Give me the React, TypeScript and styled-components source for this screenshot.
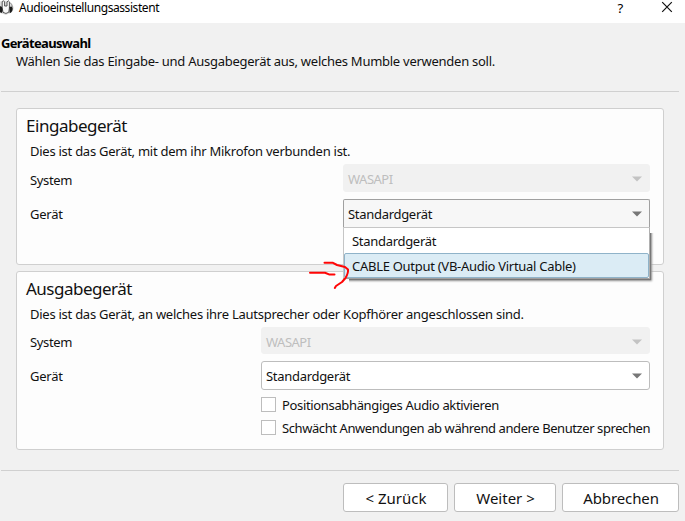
import React from 'react';
import styled, { createGlobalStyle } from 'styled-components';

const GlobalStyle = createGlobalStyle`
  *, *::before, *::after { box-sizing: border-box; }
  body {
    margin: 0;
    overflow: hidden;
    background: #f1f1f1;
    color: #111;
    font: 13px "Noto Sans", "Segoe UI", sans-serif;
  }
`;

const Wizard = styled.div`
  position: relative;
  display: flex;
  flex-direction: column;
  width: 685px;
  height: 521px;
  background: #f1f1f1;
`;

const Text = styled.span<{ $track?: number }>`
  white-space: nowrap;
  letter-spacing: ${(p) => p.$track ?? -0.256}px;
`;

const TitleBar = styled.header`
  display: flex;
  align-items: flex-start;
  height: 23px;
  background: #fff;
  color: #000;
  font-size: 12px;
  line-height: 16px;
`;

const AppIcon = styled.svg`
  flex: none;
  width: 14px;
  height: 16px;
  margin-right: 5px;
`;

const WindowControls = styled.div`
  display: flex;
  align-items: flex-start;
  gap: 35px;
  margin-left: auto;
  padding-right: 12px;
`;

const HelpMark = styled.span`
  width: 8px;
  font-size: 12px;
  line-height: 17px;
  transform: scale(1.1, 1.1);
`;

const CloseIcon = styled.svg`
  width: 12px;
  height: 12px;
  margin-top: 1px;
`;

const PageHeader = styled.section`
  display: flex;
  flex-direction: column;
  height: 69px;
  margin: 0 6px 16px 1px;
  padding-top: 11px;
  border-bottom: 1px solid #d0d0d0;
`;

const PageTitle = styled.h1`
  margin: 0;
  font-size: 13px;
  font-weight: 700;
  line-height: 18px;
  color: #000;
`;

const PageSubtitle = styled.p`
  margin: 0 0 0 15px;
  line-height: 19px;
`;

const Group = styled.section<{ $height: number }>`
  flex: none;
  height: ${(p) => p.$height}px;
  margin: 0 21px 6px 16px;
  padding: 5px 13px 0;
  background: #fdfdfd;
  border: 1px solid #cfcfcf;
  border-radius: 3px;
`;

const GroupTitle = styled.h2`
  margin: 0 0 1px -4px;
  font-size: 17px;
  font-weight: 400;
  line-height: 24px;
`;

const Description = styled.p`
  margin: 0;
  line-height: 25px;
`;

const Fields = styled.div<{ $labelWidth: number; $first: number }>`
  display: grid;
  grid-template-columns: ${(p) => p.$labelWidth}px 1fr;
  grid-template-rows: ${(p) => p.$first}px 29px;
  row-gap: 7px;
  align-items: center;
`;

const SystemLabel = styled.div`
  padding-top: 3px;
  letter-spacing: -0.362px;
`;

const Combo = styled.div<{ $tone?: 'open' | 'disabled' }>`
  display: flex;
  align-items: center;
  justify-content: space-between;
  height: 100%;
  padding: ${(p) => (p.$tone === 'disabled' ? 2 : 0)}px 7px 0 4px;
  border: 1px solid
    ${(p) => (p.$tone === 'disabled' ? '#f1f1f1' : p.$tone === 'open' ? '#a0a0a0' : '#bdbdbd')};
  border-bottom-color: ${(p) => (p.$tone === 'open' ? '#c4c4c4' : '')};
  border-radius: ${(p) => (p.$tone === 'open' ? '2px 2px 0 0' : '3px')};
  background: ${(p) => (p.$tone === 'disabled' ? '#f1f1f1' : p.$tone === 'open' ? '#f7f7f7' : '#fff')};
  color: ${(p) => (p.$tone === 'disabled' ? '#bebebe' : '#111')};
`;

const Arrow = styled.svg`
  width: 10px;
  height: 6px;
`;

const ComboAnchor = styled.div`
  position: relative;
  height: 100%;
`;

const Popup = styled.div`
  position: absolute;
  z-index: 2;
  top: 28px;
  left: 0;
  width: 307px;
  height: 52px;
  border: 1px solid #c6c6c6;
  border-right-color: #b0b0b0;
  border-bottom-color: #a0a0a0;
  background: #fff;
  box-shadow: 1px 1px 1px #777, 2px 2px 2px #999;
  clip-path: polygon(0 0, 307px 0, 307px 6px, 311px 6px, 311px 56px, 6px 56px, 6px 52px, 0 52px);
`;

const Option = styled.div<{ $active?: boolean }>`
  height: 25px;
  padding-left: 7px;
  line-height: 24px;
  border: ${(p) => (p.$active ? '1px solid #8fb3c9' : '1px solid transparent')};
  border-radius: 2px;
  background: ${(p) => (p.$active ? '#dbecf5' : '#fff')};
`;

const Checks = styled.div`
  display: flex;
  flex-direction: column;
  gap: 5px;
  margin: 6px 0 0 231px;
`;

const Check = styled.label`
  display: flex;
  align-items: center;
  gap: 6px;
  height: 18px;
`;

const Box = styled.span`
  flex: none;
  width: 15px;
  height: 15px;
  margin-top: -1px;
  border: 1px solid #bdbdbd;
  background: #fff;
`;

const Footer = styled.footer`
  display: flex;
  justify-content: flex-end;
  gap: 6px;
  margin: 14px 6px 0 1px;
  padding-top: 12px;
  border-top: 1px solid #d0d0d0;
`;

const Button = styled.button<{ $width: number }>`
  display: flex;
  align-items: center;
  justify-content: center;
  width: ${(p) => p.$width}px;
  height: 29px;
  padding: 1px 0 0 1px;
  border: 1px solid #bdbdbd;
  border-radius: 3px;
  background: #fff;
  color: #111;
  font: inherit;
  font-size: 15px;
`;

const Annotation = styled.svg`
  position: absolute;
  z-index: 3;
  left: 305px;
  top: 258px;
  width: 48px;
  height: 34px;
  pointer-events: none;
`;

const DropArrow = ({ muted }: { muted?: boolean }) => (
  <Arrow viewBox="0 0 10 6">
    <path d="M0 .5H10L5 5.5Z" fill={muted ? '#c3c3c3' : '#777'} />
  </Arrow>
);

export default function App() {
  return (
    <>
      <GlobalStyle />
      <Wizard>
        <TitleBar>
          <AppIcon viewBox="0 0 14 16">
            <path d="M0 1.5Q6-1 11 3T12 12L6 15L0 13Z" fill="#ddd" />
            <path d="M2.2 8V1.8Q3.4-.5 4.6 2V6H7V2Q8.2-.5 9.4 1.8V8L8.8 12.2Q6 14.6 3 12.4Z" fill="#f8f8f8" stroke="#444" strokeWidth=".9" />
            <path d="M0 6.2Q2 5.8 2.4 8.5T1.8 13L0 12.2ZM9.5 7Q12.5 5.3 12.7 8.6T9.7 13.3Z" fill="#1c1c1c" />
            <path d="M10 2.5Q12 4 12.4 7" fill="none" stroke="#777" strokeWidth=".8" />
          </AppIcon>
          <Text $track={-0.42}>Audioeinstellungsassistent</Text>
          <WindowControls>
            <HelpMark>?</HelpMark>
            <CloseIcon viewBox="0 0 12 12">
              <path d="M1.2 1.2L10.8 10.8M10.8 1.2L1.2 10.8" stroke="#111" strokeWidth="1.2" />
            </CloseIcon>
          </WindowControls>
        </TitleBar>

        <PageHeader>
          <PageTitle><Text $track={-0.65}>Geräteauswahl</Text></PageTitle>
          <PageSubtitle>
            <Text $track={-0.264}>Wählen Sie das Eingabe- und Ausgabegerät aus, welches Mumble verwenden soll.</Text>
          </PageSubtitle>
        </PageHeader>

        <Group $height={157}>
          <GroupTitle><Text $track={-0.48}>Eingabegerät</Text></GroupTitle>
          <Description><Text>Dies ist das Gerät, mit dem ihr Mikrofon verbunden ist.</Text></Description>
          <Fields $labelWidth={313} $first={28}>
            <SystemLabel>System</SystemLabel>
            <Combo $tone="disabled"><Text $track={-0.5}>WASAPI</Text><DropArrow muted /></Combo>
            <Text $track={-0.25}>Gerät</Text>
            <ComboAnchor>
              <Combo $tone="open"><Text $track={-0.3}>Standardgerät</Text><DropArrow /></Combo>
              <Popup>
                <Option><Text $track={-0.3}>Standardgerät</Text></Option>
                <Option $active><Text $track={-0.28}>CABLE Output (VB-Audio Virtual Cable)</Text></Option>
              </Popup>
            </ComboAnchor>
          </Fields>
        </Group>

        <Group $height={179}>
          <GroupTitle><Text $track={-0.5}>Ausgabegerät</Text></GroupTitle>
          <Description><Text>Dies ist das Gerät, an welches ihre Lautsprecher oder Kopfhörer angeschlossen sind.</Text></Description>
          <Fields $labelWidth={231} $first={27}>
            <SystemLabel>System</SystemLabel>
            <Combo $tone="disabled"><Text $track={-0.5}>WASAPI</Text><DropArrow muted /></Combo>
            <Text $track={-0.25}>Gerät</Text>
            <Combo><Text $track={-0.3}>Standardgerät</Text><DropArrow /></Combo>
          </Fields>
          <Checks>
            <Check><Box /><Text $track={-0.345}>Positionsabhängiges Audio aktivieren</Text></Check>
            <Check><Box /><Text $track={-0.42}>Schwächt Anwendungen ab während andere Benutzer sprechen</Text></Check>
          </Checks>
        </Group>

        <Footer>
          <Button $width={105}><Text $track={0}>&lt; Zurück</Text></Button>
          <Button $width={102}><Text $track={0}>Weiter &gt;</Text></Button>
          <Button $width={117}><Text $track={-0.1}>Abbrechen</Text></Button>
        </Footer>

        <Annotation viewBox="0 0 48 34" fill="none" stroke="#ff0505" strokeWidth="2" strokeLinecap="round" strokeLinejoin="round">
          <path d="M5 14.8H20L24 16.4H29.5" />
          <path d="M19.5 4.8H28L32 7L40 9L43 11.5Q43.5 15 40.5 20L37 24L31 28L29.8 30" />
        </Annotation>
      </Wizard>
    </>
  );
}
